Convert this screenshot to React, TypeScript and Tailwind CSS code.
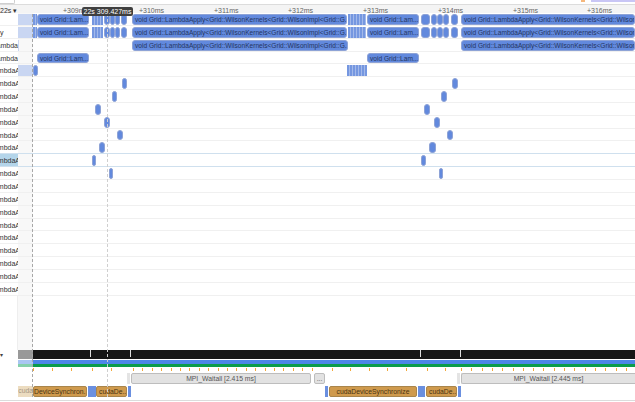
type Bar = { x: number; w: number; label?: string; kind?: 'solid' | 'seg' | 'faint' }

const longLabel = 'void Grid::LambdaApply<Grid::WilsonKernels<Grid::WilsonImpl<Grid::G...'
const edgeLabel = 'void Grid::LambdaApply<Grid::WilsonKernels<Grid::WilsonIm'
const shortLabel = 'void Grid::Lam...'

const topBars: Bar[] = [
  { x: 18, w: 15, kind: 'faint' },
  { x: 33, w: 4, kind: 'seg' },
  { x: 37, w: 52, label: shortLabel },
  { x: 92, w: 11, kind: 'seg' },
  { x: 104, w: 6 },
  { x: 110, w: 5 },
  { x: 115, w: 5 },
  { x: 121, w: 6 },
  { x: 132, w: 215, label: longLabel },
  { x: 348, w: 18, kind: 'seg' },
  { x: 367, w: 52, label: shortLabel },
  { x: 421, w: 9 },
  { x: 431, w: 6 },
  { x: 437, w: 6 },
  { x: 443, w: 6 },
  { x: 451, w: 7 },
  { x: 461, w: 174, label: edgeLabel },
]

const rows: { label: string; bars: Bar[]; selected?: boolean }[] = [
  { label: '', bars: topBars },
  { label: 'y', bars: topBars },
  { label: 'ambda', bars: [{ x: 18, w: 1, kind: 'faint' }, { x: 132, w: 216, label: longLabel }, { x: 461, w: 174, label: edgeLabel }] },
  { label: 'ambda', bars: [{ x: 37, w: 52, label: shortLabel }, { x: 367, w: 52, label: shortLabel }] },
  { label: 'mbdaA', bars: [{ x: 18, w: 15, kind: 'faint' }, { x: 33, w: 5 }, { x: 347, w: 20, kind: 'seg' }] },
  { label: 'mbdaA', bars: [{ x: 122, w: 5 }, { x: 452, w: 6 }] },
  { label: 'mbdaA', bars: [{ x: 112, w: 5 }, { x: 441, w: 6 }] },
  { label: 'mbdaA', bars: [{ x: 95, w: 6 }, { x: 424, w: 6 }] },
  { label: 'mbdaA', bars: [{ x: 104, w: 6 }, { x: 434, w: 6 }] },
  { label: 'mbdaA', bars: [{ x: 117, w: 6 }, { x: 447, w: 6 }] },
  { label: 'mbdaA', bars: [{ x: 99, w: 6 }, { x: 429, w: 7 }] },
  { label: 'mbdaA', bars: [{ x: 92, w: 4 }, { x: 421, w: 5 }], selected: true },
  { label: 'mbdaA', bars: [{ x: 109, w: 3 }, { x: 439, w: 3 }] },
  ...Array.from({ length: 9 }, () => ({ label: 'mbdaA', bars: [] as Bar[] })),
]

const ticks = [
  { x: 63, t: '+309ms' },
  { x: 139, t: '+310ms' },
  { x: 214, t: '+311ms' },
  { x: 288, t: '+312ms' },
  { x: 363, t: '+313ms' },
  { x: 438, t: '+314ms' },
  { x: 513, t: '+315ms' },
  { x: 587, t: '+316ms' },
]

const orangeTicks = [
  33, 52, 71, 92, 111,
  ...Array.from({ length: 20 }, (_, i) => 133 + i * 9.4),
  332, 350, 369, 387, 406, 427, 445,
  ...Array.from({ length: 18 }, (_, i) => 461 + i * 10.3),
]

function TrackBar({ bar }: { bar: Bar }) {
  const style = { left: bar.x - 18, width: bar.w }
  if (bar.kind === 'faint') {
    return <div className="absolute top-[1px] bottom-0 bg-[#c9d6f2]" style={style} />
  }
  if (bar.kind === 'seg') {
    return <div className="absolute top-[1px] bottom-0 bg-[repeating-linear-gradient(90deg,#7597e0_0px,#7597e0_2px,#a3b9ea_2px,#a3b9ea_3px)]" style={style} />
  }
  return (
    <div
      className="absolute top-[1px] bottom-0 overflow-hidden rounded-[3px] border border-[#8ea3d6] bg-[#6289dd] pl-[2px] text-[6.6px] leading-[9px] whitespace-nowrap text-[#24355f]"
      style={style}
    >
      {bar.label}
    </div>
  )
}

export default function App() {
  return (
    <div className="relative flex h-[402px] w-[635px] flex-col overflow-hidden bg-white font-['Liberation_Sans',Arial,sans-serif]">
      {/* Toolbar remnant */}
      <div className="relative h-[5px] shrink-0 border-b border-[#dcdcdc] bg-white">
        <div className="absolute top-0 left-0 h-[4px] w-[15px] rounded-br-[2px] border-r border-b border-[#cfcfcf]" />
        <div className="absolute top-0 left-[581px] h-[2px] w-[4px] bg-[#f5b77c]" />
        <div className="absolute top-0 left-[591px] h-[2px] w-[44px] bg-[#c9c6f5]" />
      </div>

      {/* Ruler */}
      <div className="relative h-[8px] shrink-0 bg-[#f4f4f4] text-[7px] leading-[11px] text-[#666]">
        <span className="absolute top-0 left-0 text-[#333]">22s ▾</span>
        {ticks.map((tick) => (
          <span key={tick.t} className="absolute top-0" style={{ left: tick.x }}>
            {tick.t}
          </span>
        ))}
        <div className="absolute top-[2px] left-[82px] z-10 h-[9px] w-[51px] rounded-[2px] bg-[#3f3f3f] text-center text-[7px] leading-[9px] text-white">
          22s 309.427ms
        </div>
      </div>

      {/* Thread rows */}
      <div className="flex h-[337px] shrink-0 flex-col">
        {rows.map((row, i) => (
          <div
            key={i}
            className={`flex h-[12.85px] shrink-0 border-b ${row.selected || rows[i + 1]?.selected ? 'border-[#cfe0ee]' : 'border-[#f0f0f0]'}`}
          >
            <div className={`flex w-[18px] shrink-0 overflow-hidden text-[7px] leading-[14px] whitespace-nowrap text-[#333] ${row.label === 'y' ? 'justify-start' : 'justify-end'} ${row.selected ? 'bg-[#b4d5ea]' : 'bg-white'}`}>
              <span className={row.label === 'mbdaA' ? '-mr-[2px] shrink-0' : 'shrink-0'}>{row.label}</span>
            </div>
            <div className="relative flex-1">
              <div className="absolute inset-y-0 left-0 w-[15px] bg-[#f8f8f8]" />
              {row.bars.map((bar, j) => (
                <TrackBar key={j} bar={bar} />
              ))}
            </div>
          </div>
        ))}
        <div className="flex flex-1">
          <div className="w-[18px] shrink-0 border-r border-[#eee]" />
          <div className="w-[15px] shrink-0 bg-[#f8f8f8]" />
        </div>
      </div>

      {/* Bottom tracks */}
      <div className="flex flex-1 flex-col">
        <div className="flex h-[9px] shrink-0">
          <div className="w-[18px] shrink-0 pt-[2px] text-[6px] leading-[7px] text-[#444]">▾</div>
          <div className="w-[15px] shrink-0 bg-[#999]" />
          <div className="relative flex-1 bg-[#161616]">
            {[57, 97, 387, 427].map((x) => (
              <div key={x} className="absolute top-0 h-[7px] w-[1px] bg-[#ddd]" style={{ left: x }} />
            ))}
          </div>
        </div>
        <div className="mt-[1px] ml-[18px] flex h-[4px] shrink-0">
          <div className="w-[15px] bg-[#a9c6f2]" />
          <div className="flex-1 bg-[#4c86e8]" />
        </div>
        <div className="ml-[18px] flex h-[3px] shrink-0">
          <div className="w-[15px] bg-[#85d0ab]" />
          <div className="flex-1 bg-[#0b9c4c]" />
        </div>
        <div className="relative mt-[1px] ml-[18px] h-[3px] shrink-0">
          {orangeTicks.map((x) => (
            <div key={x} className="absolute top-0 h-[3px] w-[1px] bg-[#f2a93b]" style={{ left: x - 18 }} />
          ))}
        </div>

        {/* MPI calls */}
        <div className="mt-[2px] flex h-[11px] shrink-0 text-center text-[6.8px] leading-[9px] text-[#555]">
          <div className="ml-[127px] w-[3px] bg-[#e4e4e4]" />
          <div className="ml-[1px] w-[180px] rounded-[2px] border border-[#bdbdbd] bg-[#e2e2e2]">MPI_Waitall [2.415 ms]</div>
          <div className="ml-[3px] w-[11px] rounded-[2px] border border-[#bdbdbd] bg-[#e2e2e2]">...</div>
          <div className="ml-[132px] w-[3px] bg-[#e4e4e4]" />
          <div className="ml-[1px] flex-1 rounded-l-[2px] border border-r-0 border-[#bdbdbd] bg-[#e2e2e2]">MPI_Waitall [2.445 ms]</div>
        </div>

        {/* cuda calls */}
        <div className="mt-[2px] ml-[18px] flex h-[11px] shrink-0 text-[6.8px] leading-[9px] whitespace-nowrap text-[#4a3413]">
          <div className="w-[15px] overflow-hidden bg-[#ecdcc0] text-right text-[#a59680]">cuda</div>
          <div className="w-[54px] overflow-hidden rounded-[2px] border border-[#a9854b] bg-[#cf9a4d]">DeviceSynchron...</div>
          <div className="ml-[1px] w-[8px] bg-[#6a8fdf]" />
          <div className="w-[31px] overflow-hidden rounded-[2px] border border-[#a9854b] bg-[#cf9a4d] pl-[2px]">cudaDe...</div>
          <div className="ml-[1px] w-[3px] bg-[#6a8fdf]" />
          <div className="ml-[194px] w-[3px] bg-[#6a8fdf]" />
          <div className="ml-[1px] w-[88px] overflow-hidden rounded-[2px] border border-[#a9854b] bg-[#cf9a4d] text-center">cudaDeviceSynchronize</div>
          <div className="ml-[1px] w-[7px] bg-[#6a8fdf]" />
          <div className="ml-[1px] w-[31px] overflow-hidden rounded-[2px] border border-[#a9854b] bg-[#cf9a4d] pl-[2px]">cudaDe...</div>
          <div className="ml-[1px] w-[3px] bg-[#6a8fdf]" />
        </div>
        <div className="mt-[3px] h-[1px] shrink-0 bg-[#dcdcdc]" />
      </div>

      {/* Cursor lines */}
      <div className="absolute top-[14px] bottom-[5px] left-[32px] w-0 border-l border-dashed border-[#a8a8a8]" />
      <div className="absolute top-[14px] bottom-[5px] left-[107px] w-0 border-l border-dashed border-[#cfcfcf]" />
    </div>
  )
}
